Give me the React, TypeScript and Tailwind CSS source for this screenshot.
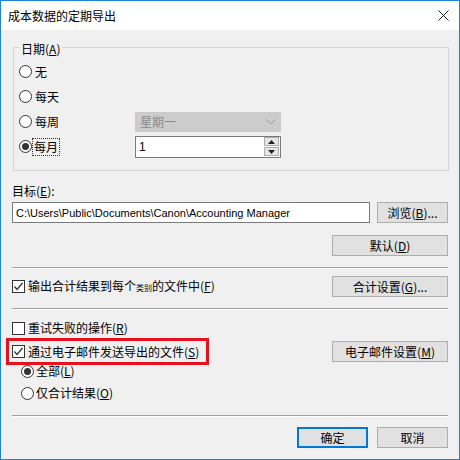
import type { ReactNode } from 'react';

const cjk = { fontFamily: '"Noto Sans CJK SC", "Noto Sans", sans-serif' };

function Key({ k }: { k: string }) {
  return (
    <span>
      (<span className="underline underline-offset-1">{k}</span>)
    </span>
  );
}

function Radio({ checked }: { checked?: boolean }) {
  return (
    <span className="flex h-[13px] w-[13px] shrink-0 items-center justify-center rounded-full border border-[#333333] bg-white">
      {checked && <span className="h-[7px] w-[7px] rounded-full bg-[#333333]" />}
    </span>
  );
}

function Checkbox({ checked }: { checked?: boolean }) {
  return (
    <span className="flex h-[13px] w-[13px] shrink-0 items-center justify-center border border-[#333333] bg-white">
      {checked && (
        <svg width="11" height="11" viewBox="0 0 11 11">
          <polyline points="1.5,5.5 4,8.5 9.5,2" fill="none" stroke="#333333" strokeWidth="1.3" />
        </svg>
      )}
    </span>
  );
}

function Button({ children, primary, className = '' }: { children: ReactNode; primary?: boolean; className?: string }) {
  return (
    <div
      className={`flex h-[21px] items-center justify-center bg-[#e1e1e1] text-[12px] leading-[16px] text-black ${
        primary ? 'border-2 border-[#0078d7]' : 'border border-[#adadad]'
      } ${className}`}
    >
      {children}
    </div>
  );
}

function Separator({ className = '' }: { className?: string }) {
  return <div className={`h-[2px] border-t border-b border-t-[#a0a0a0] border-b-white ${className}`} />;
}

export default function App() {
  return (
    <div
      className="flex h-[460px] w-[460px] flex-col border border-[#1883d7] bg-[#f0f0f0] text-[12px] leading-[16px] text-black"
      style={cjk}
    >
      {/* title bar */}
      <div className="flex h-[29px] shrink-0 items-center justify-between bg-white pl-[7px] pr-[10px]">
        <span className="text-[12px]">成本数据的定期导出</span>
        <svg width="11" height="11" viewBox="0 0 11 11">
          <path d="M0.5 0.5 L10.5 10.5 M10.5 0.5 L0.5 10.5" stroke="#1a1a1a" strokeWidth="1" />
        </svg>
      </div>

      <div className="flex flex-1 flex-col px-[11px]">
        {/* period group */}
        <fieldset className="ml-[1px] mt-[7px] w-[436px] border border-[#d5d5d5] pb-[11px] pl-[5px]">
          <legend className="px-[2px] pt-[4px] leading-[16px]">
            日期<Key k="A" />
          </legend>
          <div className="grid grid-cols-[116px_146px] pt-[2px]">
            <div className="flex h-[25px] items-center gap-[3px]">
              <Radio />
              <span>无</span>
            </div>
            <div />
            <div className="flex h-[25px] items-center gap-[3px]">
              <Radio />
              <span>每天</span>
            </div>
            <div />
            <div className="flex h-[25px] items-center gap-[3px]">
              <Radio />
              <span>每周</span>
            </div>
            <div className="flex h-[25px] items-center">
              <div className="flex h-[20px] w-[146px] items-center justify-between border border-[#cacaca] bg-[#cccccc] pl-[4px] pr-[4px] text-[#8a8a8a]">
                <span>星期一</span>
                <svg width="10" height="6" viewBox="0 0 10 6">
                  <polyline points="0.5,0.5 5,5 9.5,0.5" fill="none" stroke="#9a9a9a" strokeWidth="1" />
                </svg>
              </div>
            </div>
            <div className="flex h-[25px] items-center gap-[1px]">
              <Radio checked />
              <span className="px-[1px] outline outline-1 outline-dotted outline-[#333333]">每月</span>
            </div>
            <div className="flex h-[25px] items-center">
              <div className="flex h-[22px] w-[146px] items-center justify-between border border-[#7a7a7a] bg-white pl-[3px] pr-[1px]">
                <span style={{ fontFamily: '"Liberation Sans", sans-serif' }}>1</span>
                <div className="flex flex-col gap-[1px]">
                  <div className="flex h-[9px] w-[15px] items-center justify-center border border-[#adadad] bg-[#e6e6e6]">
                    <svg width="7" height="4" viewBox="0 0 7 4">
                      <polygon points="0,4 3.5,0 7,4" fill="#222" />
                    </svg>
                  </div>
                  <div className="flex h-[9px] w-[15px] items-center justify-center border border-[#adadad] bg-[#e6e6e6]">
                    <svg width="7" height="4" viewBox="0 0 7 4">
                      <polygon points="0,0 3.5,4 7,0" fill="#222" />
                    </svg>
                  </div>
                </div>
              </div>
            </div>
          </div>
        </fieldset>

        {/* target */}
        <div className="mt-[12px]">
          目标<Key k="E" />:
        </div>
        <div className="mt-[3px] flex items-start justify-between">
          <div
            className="flex h-[21px] w-[358px] items-center border border-[#7a7a7a] bg-white pl-[3px] text-[11px]"
            style={{ fontFamily: '"Liberation Sans", sans-serif' }}
          >
            C:\Users\Public\Documents\Canon\Accounting Manager
          </div>
          <Button className="w-[71px]">
            浏览<Key k="B" />...
          </Button>
        </div>
        <div className="mt-[12px] flex justify-end">
          <Button className="w-[116px]">
            默认<Key k="D" />
          </Button>
        </div>

        <Separator className="mt-[11px]" />

        <div className="mt-[7px] flex items-center justify-between">
          <div className="flex items-center gap-[3px]">
            <Checkbox checked />
            <span>
              输出合计结果到每个<span className="text-[8px]">类别</span>的文件中<Key k="F" />
            </span>
          </div>
          <Button className="w-[116px]">
            合计设置<Key k="G" />...
          </Button>
        </div>

        <Separator className="mt-[11px]" />

        <div className="mt-[10px] flex items-center gap-[3px]">
          <Checkbox />
          <span>
            重试失败的操作<Key k="R" />
          </span>
        </div>

        <div className="mt-[5px] flex items-center justify-between">
          <div className="relative flex items-center gap-[3px]">
            <Checkbox checked />
            <span>
              通过电子邮件发送导出的文件<Key k="S" />
            </span>
            <div className="absolute left-[-6px] top-[-6px] h-[27px] w-[203px] border-[3px] border-[#e8101c]" />
          </div>
          <Button className="w-[116px]">
            电子邮件设置<Key k="M" />
          </Button>
        </div>

        <div className="mt-[1px] flex items-center gap-[2px] pl-[9px]">
          <Radio checked />
          <span>
            全部<Key k="L" />
          </span>
        </div>
        <div className="mt-[6px] flex items-center gap-[2px] pl-[9px]">
          <Radio />
          <span>
            仅合计结果<Key k="O" />
          </span>
        </div>

        <Separator className="mt-[14px]" />

        <div className="mt-[10px] flex justify-end gap-[9px]">
          <Button primary className="w-[71px]">
            确定
          </Button>
          <Button className="w-[71px]">取消</Button>
        </div>
      </div>
    </div>
  );
}
